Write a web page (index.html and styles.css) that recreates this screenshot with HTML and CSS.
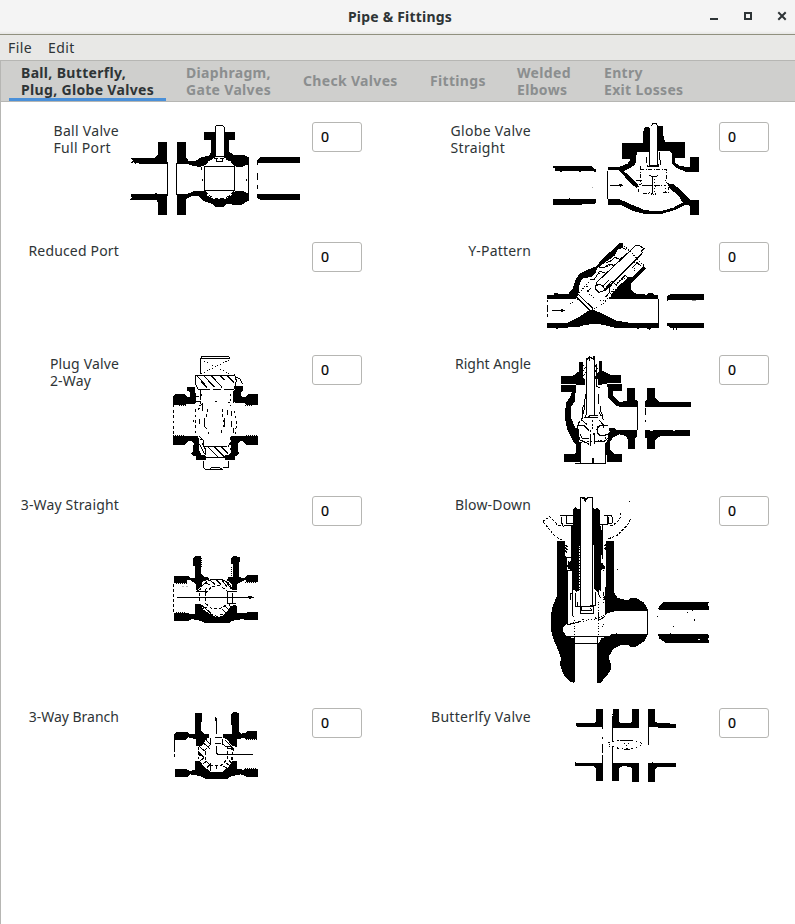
FILE: index.html
```
<!DOCTYPE html>
<html lang="en">
<head>
<meta charset="utf-8">
<title>Pipe &amp; Fittings</title>
<link rel="stylesheet" href="styles.css">
</head>
<body>
<header class="titlebar">
  <span class="title">Pipe &amp; Fittings</span>
  <svg class="controls" width="80" height="12" viewBox="0 0 80 12"><path d="M2 8h8v2h-8z"/><path fill-rule="evenodd" d="M36 2h8v8h-8zM38 4v4h4v-4z"/><path d="M71 3l6 6M77 3l-6 6" stroke="#2e3436" stroke-width="2" stroke-linecap="square"/></svg>
</header>
<nav class="menubar"><span>File</span><span>Edit</span></nav>
<nav class="tabs">
  <div class="tab active">Ball, Butterfly,<br>Plug, Globe Valves</div>
  <div class="tab t2">Diaphragm,<br>Gate Valves</div>
  <div class="tab t3">Check Valves</div>
  <div class="tab t4">Fittings</div>
  <div class="tab t5">Welded<br>Elbows</div>
  <div class="tab t6">Entry<br>Exit Losses</div>
</nav>
<main class="fittings">
  <label class="wide">Ball Valve<br>Full Port</label>
  <div class="fig"><svg width="190" height="110" viewBox="0 0 570 330">
    <path d="M33 129H104L113 119V81H141V147H60L54 142L46 147L40 142L32 145L38 137ZM33 238H141V299H114V263L108 254H30L35 249ZM171 82H197V124L205 137H228L245 126L268 122L273 112V75H252V51H285V127L269 135L253 152L238 156L216 152L202 146H171ZM312 51H345V75H327V109L340 120H373L386 127V149H377L366 157L345 154L331 136L312 127ZM171 238H200L222 228L253 227L263 243L282 252H315L334 241L345 228L368 227L386 237V257L365 269H342L318 267L310 276H287L279 268L252 259L234 243H216L199 252V299H172ZM420 127H540V143H412V134ZM412 238H540V254H421L412 249Z"/>
    <path class="line" d="M142 142V242M170 143V240M254 154H343V227H254ZM386 145V242M412 137V150M412 174V194M412 210V222M286 126V36L290 31H307L312 36V126M285 125H314M289 131V138H308V131M245 157V164M248 192V198M378 191V197M105 234H110"/>
    <path class="line" stroke-dasharray="12 6" d="M254 150L266 137L282 129H314L329 137L343 151M254 229L267 242L284 249H315L329 242L343 229"/>
  </svg></div>
  <div class="entry">0</div>
  <label class="wide">Globe Valve<br>Straight</label>
  <div class="fig globe"><svg width="179" height="110" viewBox="0 0 537 330">
    <path d="M40 154H155L168 164V173L159 168H126L120 171L113 168H69L63 171L56 168H44V158H40ZM40 253H82L88 249L95 253H168V262L163 266H130L124 270H40ZM246 84H308V57L315 35H328V111H290L288 143L280 153L251 169L264 178L294 207L292 219L279 212L242 172L235 166H203V157L210 155H239L263 146L273 131H247ZM354 34H368V53L375 80H435V130H406V143L416 151L437 156H451V125H476V171H438L407 157L395 144V115L391 109H354ZM385 207H401L444 246L451 255H476V299H451V273L438 268L404 285L363 297H316L276 287L242 269H203V252H237L273 268L316 286L363 288L400 278L428 263L419 247L386 216Z"/>
    <path class="line" d="M203 169V252M210 211H248M237 207L247 211L239 215M328 38V150H353V31M335 34L338 26L350 27L353 35M323 150V155H355V148M319 125V144M358 112V131L362 140V150M329 180L334 184H350L355 179M305 211H336M336 183V236M345 210V217"/>
    <path class="line" stroke-dasharray="11 5 3 5" d="M301 163H380V189L375 198L385 207M301 154V188M288 198L302 194L306 204L294 214V228L304 235H335L345 241L350 230M348 211H375M385 215V235L366 231"/>
    <path class="line" stroke-dasharray="3 6" d="M344 193V230M303 197L298 213M375 211V230M328 232L341 244L350 229"/>
    <rect x="156" y="216" width="3" height="3" fill="#aaa"/>
  </svg></div>
  <div class="entry">0</div>

  <label>Reduced Port</label><div class="fig"></div><div class="entry">0</div>
  <label>Y-Pattern</label>
  <div class="fig"><svg width="180" height="100" viewBox="0 0 540 300">
    <path d="M37 180H58V173H70V178H99L113 161L123 132L135 115L154 106L184 94L196 79L252 25H264V37L247 45L240 61L211 82L188 99L180 116L171 126L143 130L134 145L130 178L122 192H37ZM326 94L333 100L287 146V163L298 175L334 179L341 173H352L358 179H370V193H224L230 177L253 151L280 127H291ZM37 263H99L131 247L156 230L172 223L191 231L219 245L245 257L282 263H372V278H352L343 284L335 279H241L220 273L189 267L152 269L131 276L70 279L65 284L59 278H37ZM408 176H506V194H397V184ZM396 264H506V280H409L396 271Z"/>
    <path class="line" d="M51 226H87M77 222L87 226L79 230M370 193V266M38 195V202M38 211V230M38 238V246M396 183V199M304 30L184 143L183 152L194 147L204 154L211 165L321 55M304 30L314 32L327 41L319 48L322 54M184 150L180 161L191 172L209 167L215 156M203 154L222 136M132 181L175 221M127 188L166 228M155 170L167 161M215 156L231 138L244 150L270 121L278 127M213 84L227 78L240 67L254 73L276 56M193 99L209 97L222 87L237 91M292 99L306 83L319 94M166 132L178 133L194 109L210 113M265 39L274 44M232 146L223 158L225 171L211 187"/>
    <path class="line" stroke-dasharray="3 5" d="M262 27L328 93M128 180L160 142M153 146L165 179L190 198L213 196L253 137L271 128M177 222L219 196L243 160M105 207L130 192M192 117L213 96L244 87M297 109V78"/>
    <path class="line" stroke="#888" d="M470 196H482"/>
    <path class="line" d="M416 279V285M424 279V285M306 281H312"/>
  </svg></div>
  <div class="entry">0</div>

  <label class="mid">Plug Valve<br>2-Way</label>
  <div class="fig plug"><svg width="110" height="125" viewBox="0 0 330 375">
    <path d="M40 138L46 131H72L80 140H89V125L82 123V111H105V128L109 133V154L105 162H80L78 164H40ZM224 107H249V123L242 127V136L249 142H257L264 132H293V164H257L255 160H230L220 155V125L224 119ZM40 257H112L118 267V302L123 314L137 317V330H107V317H98L94 310L99 304L101 281L96 274H84L74 286H40ZM213 257H293V285H259L250 274H239L233 281V301L238 309L231 318L225 320V330H194V315H204L213 306Z"/>
    <path class="line" d="M123 28V21L128 18H205L210 24M122 25V73M123 25H210M106 75H224M107 75V104L114 118H150M160 118H182M192 118H222L229 92L224 73M109 75L140 110M132 78L163 111M155 78L186 112M178 75L194 91M203 78L222 98M124 95L142 113M227 82L239 86L248 103M120 163V153H108M128 166V183M130 160L119 168M122 119V150M119 207V221M132 205V230M194 203V230M203 180V196M215 183V197M214 212V230M101 209V216M221 249V233M118 259L130 271V288L135 295V314M130 289H201M204 291L213 275V257M118 281L133 312M131 333V353L135 357H150L155 353H179L188 359H151M204 333V353H188M137 322H194M144 291L177 324M163 291L195 323M184 290L204 310"/>
    <path class="line" stroke-dasharray="3 6" d="M125 29L209 71M124 71L209 29"/>
    <path class="line" stroke-dasharray="8 8" d="M41 164V257M109 138H126M107 178V260L127 270V291M113 179L124 171M144 178L137 210M136 230L147 253M224 155L211 167M223 182L231 218L225 253M186 177L191 225L182 251M165 153H172M203 157H211M211 131V154M211 261V306M124 139V133"/>
    <path class="line" stroke-dasharray="3 3" d="M58 165H78M256 165H275M40 256H72M258 256H291"/>
  </svg></div>
  <div class="entry">0</div>
  <label class="snug">Right Angle</label>
  <div class="fig angle"><svg width="150" height="120" viewBox="0 0 450 360">
    <path d="M32 77H69L86 65V36H99V78L103 94V105H79V124L75 132V154L64 169V206L75 232L86 238V271L91 280V337H41V313H72L78 307V283L70 276L52 239L45 207V185L49 158L61 140L65 127L33 125V105H78V101H32ZM147 34H156V62L169 68L185 76H214V101H167L143 106V87L138 81L141 69L147 63ZM172 103H215V124H190V139L209 155L232 154V115H254V149L263 153V172H213L197 166L175 145ZM291 114H316V143L328 155H422V171H285V154L291 149ZM175 234H193L202 241H262V259L255 265V298H234V269L228 258L208 253L189 262L181 274V299L193 313H217V337H170V316L164 304V283L173 270V250L180 246ZM285 240H296L303 243L316 239H363L371 243L380 240H420V258H331L316 270V298H291V264H285Z"/>
    <path class="line" d="M109 31L119 20L129 27V19H134V196M108 24V195M118 34V21M138 41V110L151 112M82 103V90M83 103H102M103 106V86M263 171V240M286 174V195M286 210V216M91 280V341M167 280V341M75 340H167M109 194L105 202H112L120 197H144M107 202H145M151 169V181L157 195L160 211M146 185L154 198M109 129L104 152V163L98 173L97 201M105 161L102 179L95 210L112 224M145 131V162M89 213L82 230V253L88 262M80 239L90 270L108 277L117 283M82 228L101 226L117 241M121 252V287M133 250V281M141 228V248L151 257L173 254M138 241L150 226H174M135 276L164 275L175 263M90 252L97 266H116M149 211L159 224V235M129 249L134 257"/>
    <path d="M126 324H131V338H126z"/>
    <path class="line" stroke-dasharray="6 4" d="M99 45L107 51L99 60L108 69L100 78M135 46L143 54L135 63L143 72L135 81M91 278L174 270M121 240V249M128 211V241M165 251V273M134 80L142 91"/>
    <path class="line" stroke="#fff" d="M31 103H78M170 101H214"/>
  </svg></div>
  <div class="entry">0</div>

  <label>3-Way Straight</label>
  <div class="fig three"><svg width="110" height="85" viewBox="0 0 330 255">
    <path d="M99 39L105 33H124V87L131 95H143L147 103L127 110V123L108 137V118L92 106L82 104L80 113H43V93H84L91 98H105V63H100ZM213 40L220 32L239 37V51H236V93L244 98H255L261 91H294V112H260L257 105L249 107L230 119V134H216V117L201 106L205 96H219V58H213ZM43 204H84L91 208H106V178H122L129 193L149 207L171 218L192 210L214 184L226 178L231 184V205H258L263 202H294V226H258L250 222L219 227L206 234H134L120 227L95 222L84 228H43Z"/>
    <path class="line" d="M51 157H277M265 153L278 157L267 161M123 131L109 139M108 138H136L140 128M145 106L160 103H186L205 113L217 132M217 143V178M203 139H230M205 176H229M120 177L150 202L151 207M203 139V176M125 191L141 187M186 193L205 210M196 185L214 199M207 178L216 190M126 123L142 109M150 105L165 118M167 103L183 119M184 103L202 127M198 110L213 130M136 115L151 119"/>
    <path class="line" stroke-dasharray="9 6" d="M41 116V201M119 145V174M137 143V176M136 145L155 125L179 122L203 139M137 176L155 190L179 192L203 177M151 206L171 214L191 206"/>
    <path class="line" stroke-dasharray="3 3" d="M49 114H80M256 113H291M125 39V69M213 66V92M48 203H78M260 202H292"/>
    <path d="M67 123h6v3h-6zM79 123h6v3h-6z" fill="#bbb"/>
  </svg></div>
  <div class="entry">0</div>
  <label>Blow-Down</label>
  <div class="fig blow"><svg width="180" height="200" viewBox="0 0 540 600">
    <path d="M114 58L121 51L128 57H134V167L130 184V301L124 306L117 300L110 303V240L98 235L97 225L110 210V108H114ZM174 53L180 58L186 53L192 60H195V107L201 126L199 218L211 230V236L197 240V296L189 307L181 298L177 294V168L174 159ZM66 153H84L90 158V195L97 205V401L84 411V423L95 440L118 444V579L104 574L87 556L76 528L77 503L69 479L56 450L48 419L47 382L52 352L66 316ZM213 153H236V304L247 323L268 329H283L288 323H302L327 338L338 357V362H248L218 369L209 378V299L213 287ZM192 459L200 444L219 439L230 433H338L328 453L303 470H286L280 464L257 465L234 478L221 501L227 520V539L216 557L196 579H187V460ZM373 350L386 337H521L517 345L521 350V360H375L368 356ZM370 433H519L523 440L519 445L523 458H391L371 444Z"/>
    <path class="line" d="M136 22H147L152 27L160 22H173V350M136 21V350M135 22L147 26L151 34L159 21L168 23M75 75H95V99M78 81V98L84 103M87 75H113M88 108L113 105M94 99H114M206 76H229L233 86L231 99L219 101V80M194 103H220M217 77V105M110 108V210M116 105H136M195 107V302M203 105V207M97 241V400M121 308V350H139M112 240V375L118 382M131 181V304M177 170V298M182 306V346H164M189 290V309L197 324M205 306L209 331M135 350V370H174V350M140 352L137 362H170L166 353M128 337V348H178M114 306L105 313V331M190 367V391L210 380M338 359V433M97 438H232M118 440V462M187 440V462M118 460H190M118 460V576M187 460V578M93 203H110M98 241H111M200 218L210 234M141 387H148M180 383L185 387M102 213L97 232"/>
    <path class="line" stroke-dasharray="8 4" d="M24 94L44 80L68 105L90 109M25 96L58 137L89 155M257 68V82L243 100L222 110M286 88L278 105L244 138L218 147"/>
    <path class="line" stroke-dasharray="3 5" d="M97 300V403M97 401L139 396L157 390L187 386L218 369M119 391V438M190 391V438M98 240V295M191 335V378M211 310V374M132 170V300M204 240V343"/>
    <path class="line" d="M248 360H338M97 405L137 394M244 428V434M201 411V408M206 405V402M283 33V36M248 237V240M472 360V363M457 367H460M479 386V392M367 379H370M406 430V433M415 408H418M90 165L96 169L89 173L96 178L89 182L96 187M216 160L210 166L216 170L210 176L216 182"/>
    <path class="line" stroke="#fff" d="M101 250V387M205 247V307M490 449h6"/>
  </svg></div>
  <div class="entry">0</div>

  <label class="snug">3-Way Branch</label>
  <div class="fig branch"><svg width="110" height="80" viewBox="0 0 330 240">
    <path d="M104 24H126V51H122V77L131 86H148V96L139 103L124 124H109V104L86 97L78 104H43V87L50 81H81L89 87H104V60ZM214 27L220 21H230L238 26V80L244 86L256 84L263 79H292V103H257L251 98L230 104V126L216 121L201 104L188 97V88H216V59H214ZM45 193H81L92 199L105 193V168H119L132 185L151 200H188L207 184L215 169H230V192L250 194L258 191H293V215H258L243 208L213 214L204 221H136L120 213L91 208L84 216H45Z"/>
    <path class="line" d="M44 114V141M44 147V155M168 48V88M166 37V47M169 39V88M169 124V142L173 148H279M44 102V120M151 99V118M166 114H183M166 97H187M201 129H221V137M202 155V162M214 155V166M116 139V149L130 155L116 141M118 125L138 141M129 113L150 131M138 104L151 119M187 103V117L203 128M194 104L213 122M205 104L214 113M119 169L132 158M130 176L140 168M141 187L151 178V197M188 182L200 189M199 175L211 182M207 165L215 176M199 125H215V135"/>
    <path class="line" stroke-dasharray="9 6" d="M151 119L135 135V165L148 179L163 183L185 180L202 163V135M115 127V161M217 126V165M170 193V181"/>
    <path class="line" stroke-dasharray="3 3" d="M52 104H82M258 104H292M125 25V51M49 192H80M256 190H292M215 32V54"/>
  </svg></div>
  <div class="entry">0</div>
  <label class="wide">Butterlfy Valve</label>
  <div class="fig butterfly"><svg width="120" height="89" viewBox="0 3 360 267">
    <path d="M33 69H87L93 63V27H114V81H38L33 76ZM144 27H161V65L168 69H195L201 65V27H222V83H142V48H144ZM249 27H270V64L281 70H307L310 68L315 71H333V83H280L271 81H249ZM30 187L47 190H114V243H93V205L85 199H30ZM141 189H222V246H201V206L195 201H188L181 197L168 200L162 207V243H141ZM249 189H333V201H278L270 208V246H249Z"/>
    <path class="line" d="M113 81V86M113 112V118M113 133V160M113 164V192M142 82V122M142 139V190M249 81V135M165 121H199M178 148H194M142 41V44M290 191h3M262 188h3M142 151v5"/>
    <path class="line" stroke-dasharray="5 9" d="M129 129L149 124L166 121H200L225 128L233 131L220 140L199 147L161 145L136 138"/>
    <path class="line" d="M177 130H180M188 130H191M183 135V138M132 134H135M133 140H136"/>
  </svg></div>
  <div class="entry">0</div>
</main>
</body>
</html>
```
FILE: styles.css
```
* { box-sizing: border-box; }
body { margin: 0; height: 924px; overflow: hidden; background: #fff; color: #2e3436; font: 14px/17px "Noto Sans", sans-serif; }
.titlebar { height: 35px; display: grid; grid-template-columns: 1fr auto; align-items: center; background: linear-gradient(#f4f4f4 31px, #e6e6e4 34px); border-bottom: 1px solid #90907f; }
.title { grid-area: 1 / 1 / 2 / 3; justify-self: center; padding-left: 5px; padding-bottom: 1px; font-weight: 700; letter-spacing: .2px; }
.controls { grid-area: 1 / 2; margin: 0 7px 3px 0; fill: #2e3436; }
.menubar { height: 25px; display: flex; gap: 16px; align-items: center; padding-left: 8px; background: #e8e8e6; letter-spacing: .4px; }
.tabs { height: 42px; display: flex; padding-left: 8px; border: solid #b6b6b3; border-width: 1px 0 1px 1px; background: #cfcfcd; color: #8b8e8f; font-weight: 700; letter-spacing: .33px; white-space: nowrap; }
.tab { display: flex; align-items: center; flex: none; padding: 0 0 1px 20px; }
.active { width: 157px; padding: 2px 0 0 12px; color: #2e3436; border-bottom: 3px solid #4a90d9; }
.t2 { width: 117px; }
.t3 { width: 127px; }
.t4 { width: 87px; }
.t5 { width: 87px; }
.t6 { width: 120px; }
.fittings { height: 822px; border-left: 1px solid #b6b6b3; padding-top: 13px; display: grid; grid-template-columns: 118px 193px 50px 169px 188px 50px; grid-template-rows: 120px 113px 141px 212px 223px; }
label { justify-self: end; margin-top: 7px; white-space: nowrap; letter-spacing: .17px; }
.wide { letter-spacing: .31px; }
.mid { letter-spacing: .15px; }
.snug { letter-spacing: 0; }
.fig { padding-left: 1px; overflow: hidden; }
.fig:nth-child(6n + 5) { padding-left: 4px; }
.fig svg { display: block; shape-rendering: crispEdges; }
.line { fill: none; stroke: #000; stroke-width: 3; }
.line[stroke="#fff"] { stroke: #fff; }
.line[stroke="#888"] { stroke: #888; }
.globe svg { margin-left: 5px; }
.plug svg { margin: 2px 0 0 40px; }
.angle svg { margin: 2px 0 0 15px; }
.three svg { margin: 56px 0 0 40px; }
.blow svg { margin-top: 1px; }
.branch svg { margin: 4px 0 0 40px; }
.butterfly svg { margin-left: 30px; }
.entry { width: 50px; height: 30px; margin-top: 7px; padding: 5px 8px; border: 1px solid #b6b6b3; border-radius: 3px; background: #fff; color: #000; -webkit-text-stroke: .2px #000; }
```
